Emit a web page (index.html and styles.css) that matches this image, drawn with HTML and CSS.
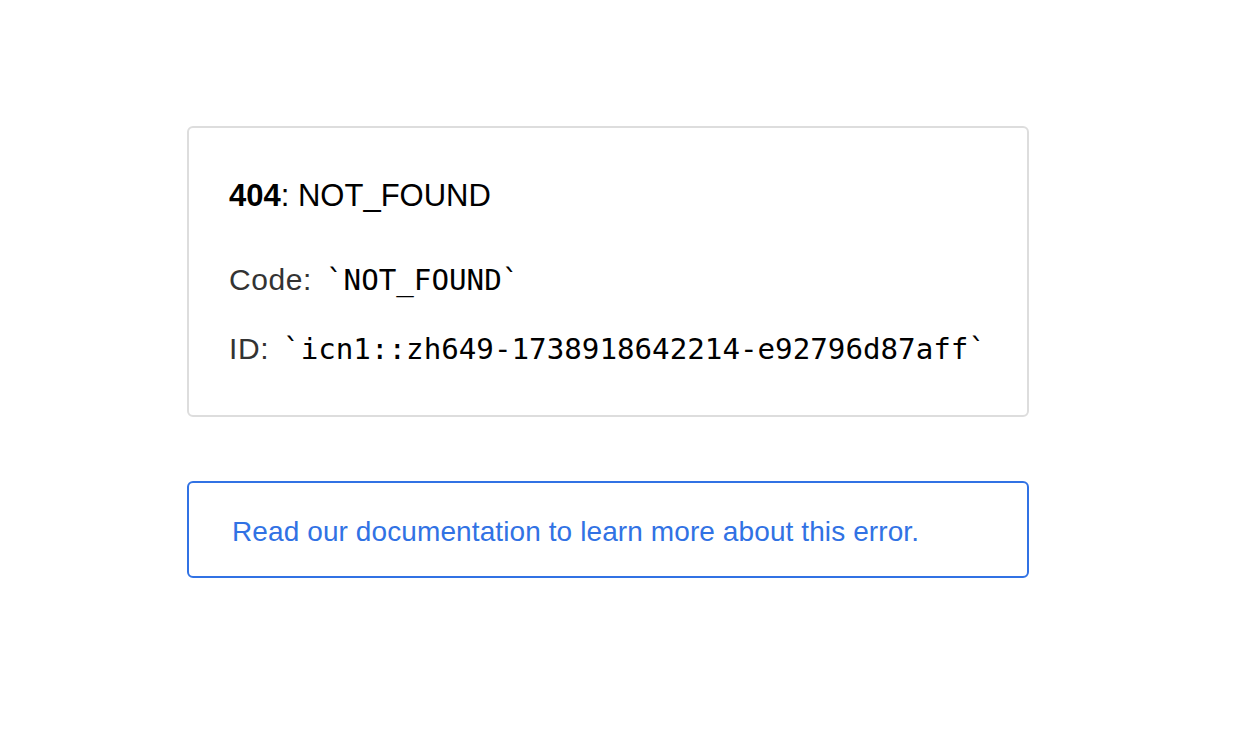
FILE: index.html
```html
<!DOCTYPE html>
<html lang="en">
<head>
<meta charset="utf-8">
<title>404: NOT_FOUND</title>
<link rel="stylesheet" href="styles.css">
</head>
<body>
<main class="page">
  <section class="error-box">
    <h1 class="title"><strong>404</strong>: NOT_FOUND</h1>
    <p class="detail">Code: <code class="mono">`NOT_FOUND`</code></p>
    <p class="detail">ID: <code class="mono">`icn1::zh649-1738918642214-e92796d87aff`</code></p>
  </section>
  <a class="doc-link" href="#">Read our documentation to learn more about this error.</a>
</main>
</body>
</html>
```

FILE: styles.css
```css
html, body {
  margin: 0;
  padding: 0;
  background: #ffffff;
}

body {
  font-family: "Liberation Sans", Arial, Helvetica, sans-serif;
  color: #000;
}

.page {
  display: flex;
  flex-direction: column;
  align-items: flex-start;
  gap: 64px;
  padding: 126px 0 0 187px;
}

.error-box {
  box-sizing: border-box;
  width: 842px;
  border: 2px solid #dddddd;
  border-radius: 6px;
  padding: 50px 40px 49px;
}

.title {
  margin: 0 0 49px;
  font-size: 31px;
  line-height: 36px;
  font-weight: 400;
  color: #000;
}

.title strong {
  font-weight: 700;
}

.detail {
  margin: 0;
  font-size: 30px;
  line-height: 34px;
  letter-spacing: 0.6px;
  color: #333333;
}

.detail + .detail {
  margin-top: 35px;
}

.mono {
  margin-left: 5px;
  font-family: "DejaVu Sans Mono", "Liberation Mono", monospace;
  font-size: 29.2px;
  letter-spacing: 0;
  color: #000;
}

.doc-link {
  box-sizing: border-box;
  display: block;
  width: 842px;
  height: 97px;
  border: 2px solid #3172e4;
  border-radius: 6px;
  padding: 32px 43px 0;
  font-size: 28px;
  line-height: 34px;
  letter-spacing: 0.1px;
  color: #3172e4;
  text-decoration: none;
}
```
